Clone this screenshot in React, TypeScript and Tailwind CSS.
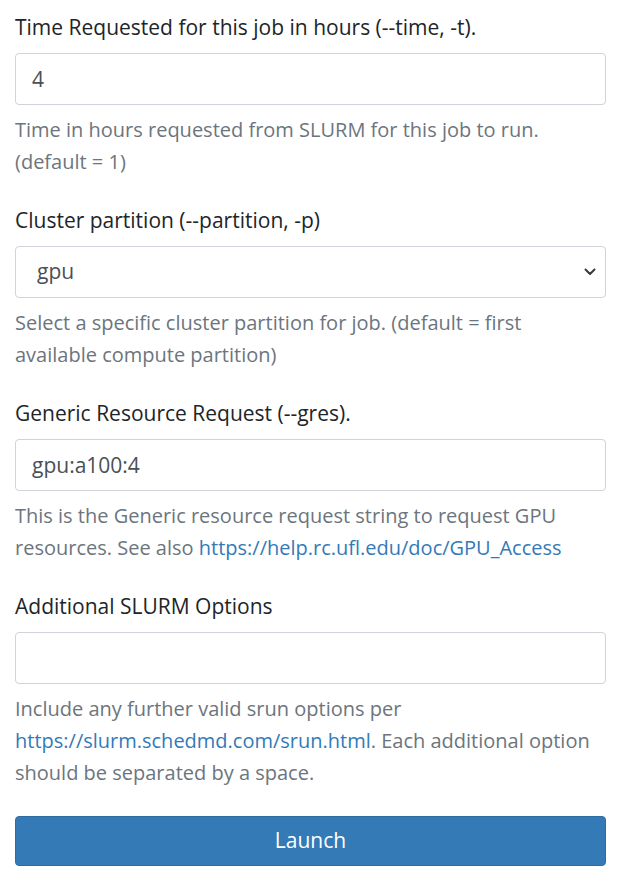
import { ReactNode } from "react";

const Label = ({ children }: { children: ReactNode }) => (
  <label className="block text-[21px] leading-[30px] text-[#212529]">{children}</label>
);

const Help = ({ children }: { children: ReactNode }) => (
  <p className="mt-[9px] text-[20px] leading-[32px] text-[#6c757d]">{children}</p>
);

const Link = ({ href }: { href: string }) => (
  <a href={href} className="text-[#337ab7] hover:underline">
    {href}
  </a>
);

const TextInput = ({ value }: { value: string }) => (
  <input
    type="text"
    defaultValue={value}
    className="mt-[11px] block h-[52px] w-full rounded-[4px] border border-[#ced4da] bg-white px-4 text-[21px] text-[#495057] outline-none"
  />
);

const ChevronDown = () => (
  <svg width="12" height="8" viewBox="0 0 12 8" fill="none" className="text-[#343a40]">
    <path d="M1.5 1.5 6 6l4.5-4.5" stroke="currentColor" strokeWidth="2" strokeLinecap="round" strokeLinejoin="round" />
  </svg>
);

const Select = ({ value }: { value: string }) => (
  <div className="relative mt-[11px]">
    <select
      defaultValue={value}
      className="block h-[52px] w-full appearance-none rounded-[4px] border border-[#ced4da] bg-white pl-[21px] pr-10 text-[21px] text-[#495057] outline-none"
    >
      <option value="gpu">gpu</option>
      <option value="hpg-default">hpg-default</option>
      <option value="hpg-milan">hpg-milan</option>
    </select>
    <span className="pointer-events-none absolute right-[10px] top-[22px]">
      <ChevronDown />
    </span>
  </div>
);

const Group = ({ children }: { children: ReactNode }) => <div className="mb-[27px]">{children}</div>;

export default function App() {
  return (
    <div className="min-h-[872px] bg-white px-[15px] pt-[12px]" style={{ fontFamily: '"Open Sans", "Noto Sans", sans-serif' }}>
      <form onSubmit={(e) => e.preventDefault()}>
        <Group>
          <Label>Time Requested for this job in hours (--time, -t).</Label>
          <TextInput value="4" />
          <Help>
            Time in hours requested from SLURM for this job to run.
            <br />
            (default = 1)
          </Help>
        </Group>

        <Group>
          <Label>Cluster partition (--partition, -p)</Label>
          <Select value="gpu" />
          <Help>
            Select a specific cluster partition for job. (default = first
            <br />
            available compute partition)
          </Help>
        </Group>

        <Group>
          <Label>Generic Resource Request (--gres).</Label>
          <TextInput value="gpu:a100:4" />
          <Help>
            This is the Generic resource request string to request GPU
            <br />
            resources. See also <Link href="https://help.rc.ufl.edu/doc/GPU_Access" />
          </Help>
        </Group>

        <Group>
          <Label>Additional SLURM Options</Label>
          <TextInput value="" />
          <Help>
            Include any further valid srun options per
            <br />
            <Link href="https://slurm.schedmd.com/srun.html" />. Each additional option
            <br />
            should be separated by a space.
          </Help>
        </Group>

        <button
          type="submit"
          className="block h-[50px] w-full rounded-[4px] border border-[#2e6da4] bg-[#337ab7] text-[21px] text-white"
        >
          Launch
        </button>
      </form>
    </div>
  );
}
